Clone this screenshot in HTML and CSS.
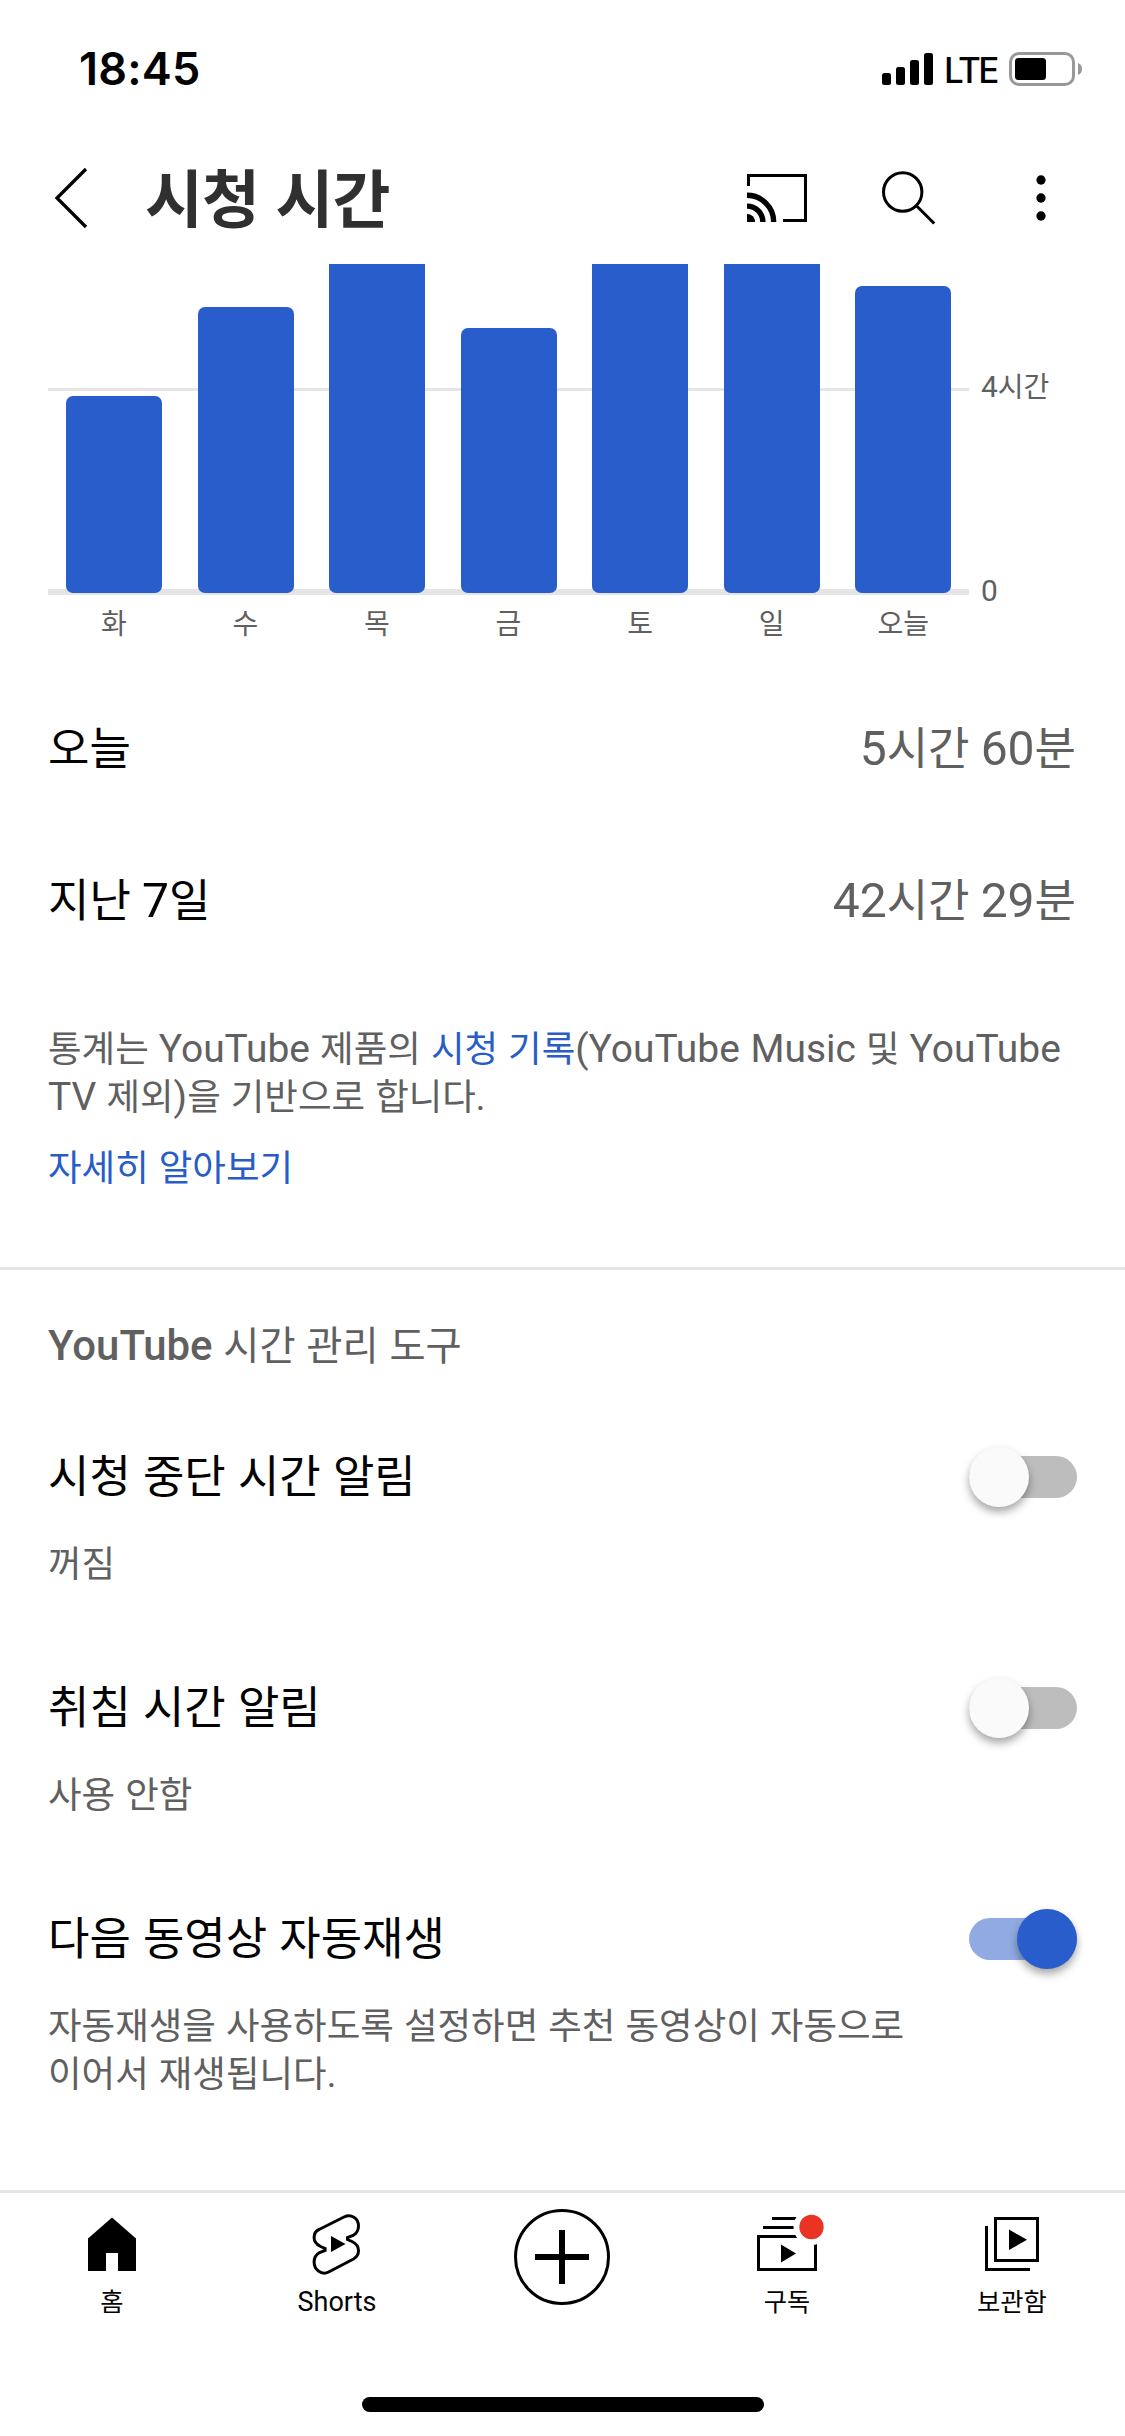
FILE: index.html
```html
<!DOCTYPE html>
<html lang="ko">
<head>
    <meta charset="UTF-8">
    <title>시청 시간</title>
    <link rel="stylesheet" href="styles.css">
</head>
<body>
    <div class="status-bar">
        <span class="clock">18:45</span>
        <div class="status-right">
            <svg class="signal" width="51" height="32" viewBox="0 0 51 32">
                <rect x="0" y="20" width="9" height="12" rx="2.5"/>
                <rect x="14" y="14" width="9" height="18" rx="2.5"/>
                <rect x="28" y="7" width="9" height="25" rx="2.5"/>
                <rect x="42" y="0" width="9" height="32" rx="2.5"/>
            </svg>
            <span class="network">LTE</span>
            <svg class="battery" width="74" height="34" viewBox="0 0 74 34">
                <rect x="1.5" y="1.5" width="63" height="31" rx="8.5" fill="none" stroke="#999" stroke-width="3"/>
                <rect x="6" y="6" width="31" height="22" rx="3.5"/>
                <path d="M69 11c2.6 1 4 3.3 4 6s-1.4 5-4 6z" fill="#999"/>
            </svg>
        </div>
    </div>

    <header class="app-bar">
        <svg class="back" width="36" height="62" viewBox="0 0 36 62">
            <path d="M33 2L4 31l29 29" fill="none" stroke="#000" stroke-width="3.3"/>
        </svg>
        <h1>시청 시간</h1>
        <div class="actions">
            <svg width="72" height="72" viewBox="0 0 24 24" fill="none" stroke="#000">
                <path d="M2.5 8V4.5h19v15H14"/>
                <path d="M2 20v-2.7A2.7 2.7 0 0 1 4.7 20z" fill="#000" stroke="none"/>
                <path d="M2 14.7A5.3 5.3 0 0 1 7.3 20M2 11.1A8.9 8.9 0 0 1 10.9 20" stroke-width="1.8"/>
            </svg>
            <svg width="72" height="72" viewBox="0 0 24 24" fill="none" stroke="#000">
                <circle cx="9.9" cy="10" r="6.4"/>
                <path d="M14.4 14.5l6 6"/>
            </svg>
            <svg width="72" height="72" viewBox="0 0 24 24">
                <circle cx="12" cy="6" r="1.55"/>
                <circle cx="12" cy="12" r="1.55"/>
                <circle cx="12" cy="18" r="1.55"/>
            </svg>
        </div>
    </header>

    <main>
        <!-- Daily watch time, scrolled partly under the header -->
        <section class="chart">
            <div class="plot">
                <div class="gridline"></div>
                <div class="baseline"></div>
                <div class="bars">
                    <div class="bar" style="height: 197px"></div>
                    <div class="bar" style="height: 286px"></div>
                    <div class="bar" style="height: 350px"></div>
                    <div class="bar" style="height: 265px"></div>
                    <div class="bar" style="height: 350px"></div>
                    <div class="bar" style="height: 350px"></div>
                    <div class="bar" style="height: 307px"></div>
                </div>
            </div>
            <div class="axis">
                <span><b>4</b>시간</span>
                <span><b>0</b></span>
            </div>
        </section>
        <div class="days">
            <span>화</span>
            <span>수</span>
            <span>목</span>
            <span>금</span>
            <span>토</span>
            <span>일</span>
            <span>오늘</span>
        </div>

        <div class="stat">
            <span>오늘</span>
            <span class="value"><b>5</b>시간 <b>60</b>분</span>
        </div>
        <div class="stat">
            <span>지난 <b>7</b>일</span>
            <span class="value"><b>42</b>시간 <b>29</b>분</span>
        </div>

        <p class="note">통계는 <b>YouTube</b> 제품의 <a>시청 기록</a><b>(YouTube Music</b> 및 <b>YouTube</b><br><b>TV</b> 제외<b>)</b>을 기반으로 합니다.</p>
        <p class="note more"><a>자세히 알아보기</a></p>

        <section class="tools">
            <h2><b>YouTube</b> 시간 관리 도구</h2>
            <div class="setting">
                <div class="setting-text">
                    <h3>시청 중단 시간 알림</h3>
                    <p>꺼짐</p>
                </div>
                <div class="toggle"></div>
            </div>
            <div class="setting">
                <div class="setting-text">
                    <h3>취침 시간 알림</h3>
                    <p>사용 안함</p>
                </div>
                <div class="toggle"></div>
            </div>
            <div class="setting">
                <div class="setting-text">
                    <h3>다음 동영상 자동재생</h3>
                    <p>자동재생을 사용하도록 설정하면 추천 동영상이 자동으로<br>이어서 재생됩니다.</p>
                </div>
                <div class="toggle on"></div>
            </div>
        </section>
    </main>

    <nav class="tab-bar">
        <div class="tab">
            <svg width="72" height="72" viewBox="0 0 72 72">
                <path d="M36 9.5L12 30.5V63h18V45h12v18h18V30.5z"/>
            </svg>
            <span>홈</span>
        </div>
        <div class="tab">
            <svg width="72" height="72" viewBox="0 0 72 72">
                <path d="M43 9C50 5.5 57.5 10 57.5 18C57.5 22.5 55.5 25.500 52 27.5L46.500 29.5V31.500L51 33.5C55 35.500 57.5 38.5 57.5 42.5C57.5 46 56 49 52.500 51L27.600 64C20.600 67.500 13.100 62 13.100 54C13.100 49.500 15.100 46.500 18.600 44.500L24.100 42.500V40.500L19.600 38.500C15.600 36.500 13.100 33.500 13.100 29.500C13.100 26 14.600 23 18.100 21.500z" fill="none" stroke="#000" stroke-width="3"/>
                <path d="M30 28v16l14.5-8z"/>
            </svg>
            <span><b>Shorts</b></span>
        </div>
        <div class="tab create">
            <svg width="96" height="96" viewBox="0 0 96 96" fill="none" stroke="#000">
                <circle cx="48" cy="48" r="46.5" stroke-width="3"/>
                <path d="M48 21v54M21 48h54" stroke-width="6"/>
            </svg>
        </div>
        <div class="tab">
            <svg width="72" height="72" viewBox="0 0 72 72">
                <path d="M21 10.5h30M12 19.5h48M7.5 28.5h57v33h-57z" fill="none" stroke="#000" stroke-width="3"/>
                <path d="M30 36.5v18L45 45.5z"/>
                <circle cx="60.5" cy="19" r="18" fill="#fff"/>
                <circle cx="60.5" cy="19" r="12.2" fill="#ea3323"/>
            </svg>
            <span>구독</span>
        </div>
        <div class="tab">
            <svg width="72" height="72" viewBox="0 0 72 72">
                <path d="M19.5 10.5h42v42h-42zM10.5 18v43.5H54" fill="none" stroke="#000" stroke-width="3"/>
                <path d="M33 21.5v20.5l18-10.2z"/>
            </svg>
            <span>보관함</span>
        </div>
    </nav>
    <div class="home-indicator"></div>
</body>
</html>
```

FILE: styles.css
```css
* {
    box-sizing: border-box;
}
body {
    width: 1125px;
    height: 2436px;
    margin: 0;
    overflow: hidden;
    background-color: #fff;
    color: #030303;
    font-family: Roboto, "Noto Sans CJK KR", sans-serif;
}
h1, h2, h3, p {
    margin: 0;
    font-weight: 400;
}
h2, h3, p {
    word-spacing: 1px;
}
svg {
    display: block;
    overflow: visible;
}
/* Latin letters and digits run a bit larger than the Hangul */
b {
    font-size: 1.067em;
    font-weight: 400;
    line-height: 0;
}
a {
    color: #285dc8;
}

/* Status bar */
.status-bar {
    display: flex;
    justify-content: space-between;
    height: 132px;
    padding: 0 42px 0 79px;
}
.clock {
    margin-top: 39px;
    font-family: Inter, sans-serif;
    font-size: 45px;
    font-weight: 600;
    line-height: 60px;
    letter-spacing: 0.2px;
}
.status-right {
    display: flex;
    align-items: flex-start;
}
.signal {
    margin-top: 53px;
}
.network {
    margin: 50px 0 0 11px;
    width: 65px;
    font-family: Inter, sans-serif;
    font-size: 35px;
    font-weight: 500;
    line-height: 41px;
    letter-spacing: -2.6px;
}
.battery {
    margin-top: 52px;
}

/* Header */
.app-bar {
    display: flex;
    align-items: center;
    height: 132px;
    padding: 0 48px 0 53px;
}
h1 {
    margin-left: 56px;
    padding-top: 5px;
    color: #303030;
    font-size: 63px;
    font-weight: 700;
    line-height: 80px;
    letter-spacing: -1px;
    word-spacing: 2px;
}
.actions {
    display: flex;
    gap: 60px;
    margin-left: auto;
}

/* Chart */
.chart {
    display: flex;
    height: 331px;
    padding-left: 48px;
}
.plot {
    position: relative;
    width: 921px;
    overflow: hidden;
}
.gridline, .baseline {
    position: absolute;
    left: 0;
    right: 0;
    background-color: #e5e5e5;
}
.gridline {
    top: 124px;
    height: 3px;
}
.baseline {
    bottom: 0;
    height: 6px;
}
.bars {
    position: relative;
    display: grid;
    grid-template-columns: repeat(7, 131.5px);
    grid-template-rows: 328.5px;
    align-items: end;
    justify-items: center;
    padding-left: 0.3px;
}
.bar {
    width: 96px;
    border-radius: 7px;
    background-color: #285dcb;
}
.axis {
    display: flex;
    flex-direction: column;
    gap: 164px;
    padding: 104px 0 0 12px;
    color: #606060;
    font-size: 28px;
    line-height: 40px;
}
.days {
    display: grid;
    grid-template-columns: repeat(7, 1fr);
    width: 921px;
    height: 77px;
    margin-left: 48px;
    padding-top: 10px;
    color: #606060;
    font-size: 28px;
    line-height: 40px;
    text-align: center;
}

/* Totals */
.stat {
    display: flex;
    justify-content: space-between;
    padding: 2px 49px 0 48px;
    height: 152px;
    font-size: 45px;
    line-height: 152px;
}
.value {
    color: #606060;
}
.note {
    padding: 50px 48px 0;
    color: #606060;
    font-size: 36.5px;
    line-height: 48px;
}
.more {
    height: 145px;
    padding-top: 23px;
}

/* Time management tools */
.tools {
    padding: 45px 48px 65px;
    border-top: 3px solid #e5e5e5;
}
h2 {
    height: 117px;
    color: #606060;
    font-size: 39.3px;
    line-height: 64px;
}
h2 b {
    font-weight: 500;
}
.setting {
    display: flex;
    justify-content: space-between;
    height: 231px;
}
.setting h3 {
    margin-top: 14px;
    font-size: 45px;
    line-height: 64px;
}
.setting p {
    margin-top: 31px;
    color: #606060;
    font-size: 36.5px;
    line-height: 48px;
}
.toggle {
    position: relative;
    width: 108px;
    height: 42px;
    margin-top: 24px;
    border-radius: 21px;
    background-color: #bdbdbd;
}
.toggle::after {
    content: "";
    position: absolute;
    top: -9px;
    left: 0;
    width: 60px;
    height: 60px;
    border-radius: 50%;
    background-color: #fafafa;
    box-shadow: 0 5px 9px rgba(0, 0, 0, 0.35);
}
.toggle.on {
    background-color: #8fabe2;
}
.toggle.on::after {
    left: 48px;
    background-color: #285dcb;
}

/* Bottom tabs */
.tab-bar {
    display: grid;
    grid-template-columns: repeat(5, 1fr);
    height: 207px;
    border-top: 3px solid #e5e5e5;
}
.tab {
    display: flex;
    flex-direction: column;
    align-items: center;
    padding: 15px 1px 0 0;
    font-size: 25.3px;
    line-height: 36px;
}
.tab.create {
    padding-top: 16px;
}
.tab span {
    margin-top: 5px;
}
.home-indicator {
    width: 402px;
    height: 15px;
    margin: 0 auto;
    border-radius: 8px;
    background-color: #000;
}
```
